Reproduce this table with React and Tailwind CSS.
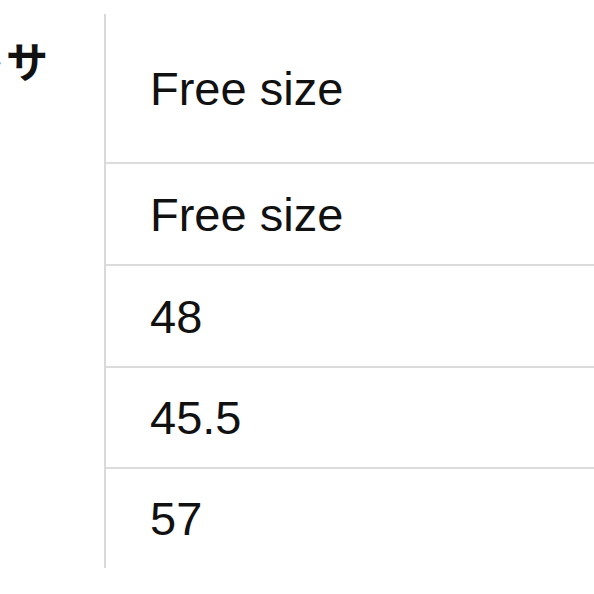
import React from 'react';

const rows = [
  { label: 'Free size', h: 'h-[150px]' },
  { label: 'Free size', h: 'h-[102px]' },
  { label: '48', h: 'h-[102px]' },
  { label: '45.5', h: 'h-[101px]' },
  { label: '57', h: 'h-[99px]' },
];

const App = () => {
  return (
    <main className="w-[594px] h-[594px] bg-white overflow-hidden flex font-['Liberation_Sans','Noto_Sans_CJK_JP',sans-serif]">
      {/* left heading column, clipped */}
      <div className="w-[104px] shrink-0 overflow-hidden pt-[30px]">
        <div className="ml-[-36px] whitespace-nowrap text-[42px] font-bold leading-[60px] text-[#111] font-['Noto_Sans_CJK_JP',sans-serif]">
          トサ
        </div>
      </div>

      {/* values column */}
      <div className="mt-[14px] h-[554px] flex-1 border-l-2 border-[#d9d9d9] flex flex-col">
        {rows.map((row, i) => (
          <div
            key={i}
            className={`${row.h} flex items-center pl-[44px] ${i < rows.length - 1 ? 'border-b-2 border-[#dcdcdc]' : ''}`}
          >
            <span className="text-[47px] leading-none text-[#111]">{row.label}</span>
          </div>
        ))}
      </div>
    </main>
  );
};

export default App;
